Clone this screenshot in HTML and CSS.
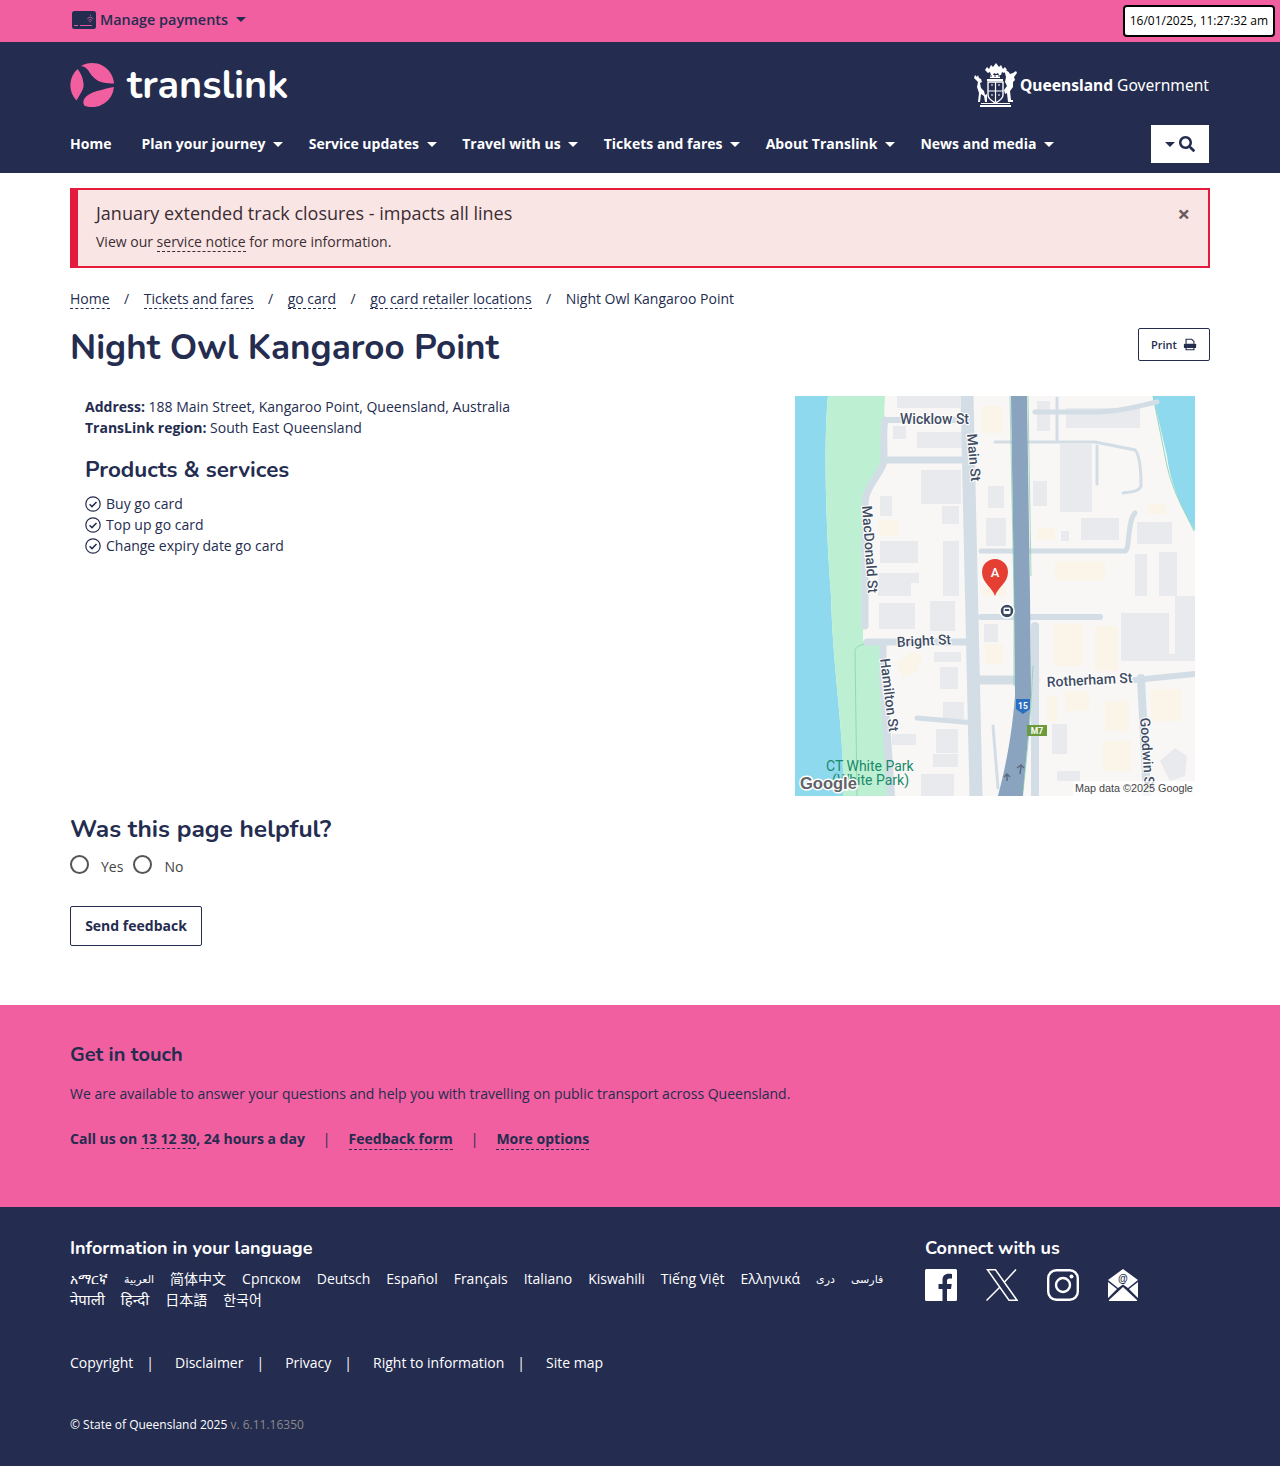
FILE: index.html
```html
<!DOCTYPE html>
<html lang="en">
  <head>
    <meta charset="UTF-8" />
    <meta name="viewport" content="width=device-width, initial-scale=1.0" />
    <title>Night Owl Kangaroo Point</title>
    <link rel="stylesheet" href="styles.css">
  </head>
  <body>
    <div class="topbar">
      <div class="topbar-inner">
        <a class="manage" href="#">
          <svg class="manage-icon" viewBox="0 0 24 18" width="24" height="18">
            <rect width="24" height="18" rx="2.500" fill="#242c4f"/>
            <path d="M15.500 8a3 3 0 0 1 5.500 0M16.500 9.500a2.200 2.200 0 0 1 3.500 0M17.500 11a1 1 0 0 1 1.500 0M18 4.500a1.500 1.500 0 0 1 1 0" fill="none" stroke="#f15fa0" stroke-width=".8"/>
            <path d="M2 14.500h4M8 14.500h12" stroke="#f15fa0" stroke-width=".9"/>
          </svg>
          Manage payments <span class="caret caret-dark"></span>
        </a>
      </div>
      <div class="clock">16/01/2025, 11:27:32 am</div>
    </div>

    <header class="site-header">
      <div class="wrap">
        <div class="brand-row">
          <a class="logo" href="#">
            <svg viewBox="0 0 44 44" width="44" height="44">
              <g fill="#f15fa0">
                <path d="M11 3A22 22 0 0 1 44 20.500C36 20.500 31 19.500 27.500 17.500C23 15 20.500 11 18 7C16 4.500 14 3.500 11 3Z"/>
                <path d="M7.500 6A22 22 0 0 0 6.500 37.500C7.500 35.500 9 33.500 10 31.500C12.500 27.500 14 24.500 13.500 20.500C13 15 11 10 7.500 6Z"/>
                <path d="M44 24A22 22 0 0 1 15 43C13 41 13 38.500 14 36.500C16 32.500 21 30 27 28C33 26.500 38 25 44 24Z"/>
              </g>
            </svg>
            <span class="logo-text">translink</span>
          </a>
          <a class="qg" href="#">
            <svg class="crest" viewBox="0 0 48 46" width="48" height="46">
              <g fill="#fff">
                <path d="M3 13l2 2 1-2 1 3 2 1 1 3-2 1 1 5 3 3 1 4 2-1v8h-2l-1-6-3-2-1 8H6l1-9-2-6 1-5-2-2-2-2z"/>
                <path d="M33 9c2-1 4 1 5 3l3-1 3-2 1 2-3 4 1 3-2 2v5l-3 4 1 9h2v2h-5l-1-9-2 1-1-4 3-4-2-4 1-5-1-4z"/>
                <path d="M9 41h29v1H9zM8 43h31v2H8z"/>
                <path d="M15 19h16v-2H15zM13 8l2-3 2 2 2-4 2 2 3-4 3 4 2-2 2 4 2-2 2 3-3 3-2-1-1 3h-2l-1-2-2 1-2-1-1 2h-2l-1-3-2 1z"/>
                <path d="M18 13h10v3H18z"/>
              </g>
              <path d="M16 20h15v13c0 4-4 6-7.500 8C20 39 16 37 16 33z" fill="none" stroke="#fff" stroke-width="1.400"/>
              <path d="M23.500 20v20M16 29h15M19 23h2M26 23h2M19 33h2M26 33h2" stroke="#fff" stroke-width="1.200"/>
              <path d="M18 14h2M22 14h2M26 14h2" stroke="#242c4f" stroke-width="1"/>
            </svg>
            <span class="qg-text"><b>Queensland</b> Government</span>
          </a>
        </div>
        <nav class="main-nav">
          <ul class="nav-list">
            <li class="nav-home"><a href="#">Home</a></li>
            <li><a href="#">Plan your journey <span class="caret"></span></a></li>
            <li><a href="#">Service updates <span class="caret"></span></a></li>
            <li><a href="#">Travel with us <span class="caret"></span></a></li>
            <li><a href="#">Tickets and fares <span class="caret"></span></a></li>
            <li><a href="#">About Translink <span class="caret"></span></a></li>
            <li><a href="#">News and media <span class="caret"></span></a></li>
          </ul>
          <button class="search-btn">
            <span class="caret caret-dark"></span>
            <svg viewBox="0 0 512 512" width="16" height="16"><path fill="#242c4f" d="M505 442.700 405.300 343c-4.500-4.500-10.600-7-17-7H372c27.600-35.300 44-79.700 44-128C416 93.100 322.900 0 208 0S0 93.100 0 208s93.100 208 208 208c48.300 0 92.700-16.400 128-44v16.300c0 6.400 2.500 12.500 7 17l99.700 99.700c9.400 9.400 24.600 9.400 33.900 0l28.300-28.300c9.400-9.400 9.400-24.600.1-34zM208 336c-70.700 0-128-57.200-128-128 0-70.700 57.200-128 128-128 70.700 0 128 57.200 128 128 0 70.700-57.200 128-128 128z"/></svg>
          </button>
        </nav>
      </div>
    </header>

    <main class="wrap">
      <div class="alert">
        <div>
          <h2 class="alert-title">January extended track closures - impacts all lines</h2>
          <p class="alert-text">View our <a href="#">service notice</a> for more information.</p>
        </div>
        <span class="alert-close">×</span>
      </div>

      <ol class="breadcrumb">
        <li><a href="#">Home</a></li>
        <li><a href="#">Tickets and fares</a></li>
        <li><a href="#">go card</a></li>
        <li><a href="#">go card retailer locations</a></li>
        <li>Night Owl Kangaroo Point</li>
      </ol>

      <div class="title-row">
        <h1>Night Owl Kangaroo Point</h1>
        <button class="print-btn">
          Print
          <svg viewBox="0 0 16 14" width="14" height="13"><path d="M3.500 6V1h6.500l2.500 2.500V6M3.500 10v3h9v-3" fill="none" stroke="#242c4f" stroke-width="1.300"/><rect x="1" y="6" width="14" height="5" rx="1" fill="#242c4f"/></svg>
        </button>
      </div>

      <div class="retailer">
        <div class="retailer-info">
          <p class="detail"><b>Address:</b> 188 Main Street, Kangaroo Point, Queensland, Australia</p>
          <p class="detail"><b>TransLink region:</b> South East Queensland</p>
          <h2 class="products-title">Products &amp; services</h2>
          <ul class="products">
            <li><svg viewBox="0 0 16 16" width="16" height="16"><circle cx="8" cy="8" r="7.200" fill="none" stroke="#242c4f" stroke-width="1.200"/><path d="M4.600 8.300l2.400 2.300 4.500-4.600" fill="none" stroke="#242c4f" stroke-width="1.500"/></svg>Buy go card</li>
            <li><svg viewBox="0 0 16 16" width="16" height="16"><circle cx="8" cy="8" r="7.200" fill="none" stroke="#242c4f" stroke-width="1.200"/><path d="M4.600 8.300l2.400 2.300 4.500-4.600" fill="none" stroke="#242c4f" stroke-width="1.500"/></svg>Top up go card</li>
            <li><svg viewBox="0 0 16 16" width="16" height="16"><circle cx="8" cy="8" r="7.200" fill="none" stroke="#242c4f" stroke-width="1.200"/><path d="M4.600 8.300l2.400 2.300 4.500-4.600" fill="none" stroke="#242c4f" stroke-width="1.500"/></svg>Change expiry date go card</li>
          </ul>
        </div>

        <svg class="map" viewBox="0 0 400 400" width="400" height="400">
          <rect width="400" height="400" fill="#f8f7f5"/>
          <path d="M0 0H33C29 40 30 120 36 200C38 280 50 340 48 400H0Z" fill="#8fd9ef"/>
          <path d="M33 0H90C88 30 90 60 88 70C80 85 70 95 68 110V245H85L95 330L98 400H48C50 340 38 280 36 200C30 120 29 40 33 0Z" fill="#bdf0d2"/>
          <path d="M358 0H400V135C385 110 375 85 372 60Z" fill="#8fd9ef"/>
          <path d="M358 0L370 60C376 95 390 115 399 135" fill="none" stroke="#7ecfa8" stroke-width=".8"/>
          <path d="M62 400L60 255C60 250 68 248 73 248" fill="none" stroke="#7ecfa8" stroke-width=".7"/>

          <g fill="#e8eaed">
            <rect x="102" y="0" width="40" height="12"/><rect x="140" y="0" width="25" height="12"/>
            <rect x="98" y="30" width="13" height="13"/><rect x="122" y="36" width="48" height="16"/>
            <rect x="126" y="74" width="40" height="34"/><rect x="85" y="100" width="12" height="20"/>
            <rect x="147" y="110" width="17" height="18"/><rect x="148" y="145" width="16" height="55"/>
            <rect x="85" y="145" width="38" height="22"/><rect x="112" y="177" width="12" height="10"/>
            <rect x="193" y="90" width="16" height="22"/><rect x="191" y="122" width="20" height="28"/>
            <rect x="242" y="5" width="13" height="30"/><rect x="271" y="12" width="74" height="20"/>
            <rect x="265" y="48" width="32" height="68"/><rect x="238" y="85" width="14" height="25"/>
            <rect x="286" y="122" width="38" height="22"/><rect x="342" y="126" width="35" height="22"/>
            <rect x="266" y="135" width="8" height="10"/>
            <rect x="340" y="158" width="12" height="42"/><rect x="364" y="156" width="18" height="44"/>
            <rect x="83" y="177" width="33" height="23"/>
            <rect x="84" y="207" width="36" height="26"/><rect x="135" y="205" width="25" height="30"/>
            <rect x="189" y="228" width="14" height="18"/><rect x="380" y="200" width="20" height="60"/>
            <rect x="326" y="225" width="10" height="28"/><rect x="139" y="256" width="27" height="10"/>
            <rect x="145" y="271" width="18" height="22"/><rect x="148" y="306" width="21" height="17"/>
            <rect x="257" y="328" width="15" height="30"/><rect x="141" y="333" width="22" height="24"/>
            <rect x="138" y="358" width="25" height="13"/><rect x="126" y="378" width="33" height="22"/>
            <rect x="262" y="375" width="23" height="10"/><rect x="97" y="338" width="24" height="11"/>
            <path d="M326 280V217H374V258H400V265H326V280Z"/><path d="M365 365L380 352L392 360L390 380L375 385Z"/>
          </g>
          <g fill="#faf5e8">
            <rect x="186" y="10" width="22" height="27"/><rect x="84" y="124" width="20" height="16"/>
            <rect x="242" y="132" width="18" height="12"/><rect x="260" y="165" width="50" height="20"/>
            <rect x="353" y="108" width="18" height="10"/><rect x="188" y="190" width="23" height="10"/>
            <rect x="258" y="228" width="30" height="42"/><rect x="300" y="230" width="23" height="45"/>
            <rect x="190" y="248" width="18" height="20"/><rect x="270" y="295" width="24" height="20"/>
            <rect x="252" y="300" width="10" height="25"/><rect x="310" y="305" width="24" height="30"/>
            <rect x="356" y="293" width="30" height="32"/><rect x="308" y="345" width="28" height="30"/>
            <path d="M102 268L118 255L128 260L122 275L108 282Z" />
          </g>

          <g fill="none" stroke="#d3dde6" stroke-linecap="round">
            <path d="M90 24H175" stroke-width="6"/>
            <path d="M90 24C88 30 89 40 89 65M92 64H175M89 65C88 76 70 90 70 108V230M72 246H175M88 250V280" stroke-width="7"/>
            <path d="M88 280L96 400" stroke-width="8"/>
            <path d="M172 0L181 400" stroke-width="13"/>
            <path d="M186 155H330C335 155 332 125 340 117" stroke-width="5"/>
            <path d="M186 221H305" stroke-width="6"/>
            <path d="M186 284H240" stroke-width="9"/>
            <path d="M240 16H300C330 16 350 8 362 6" stroke-width="5"/>
            <path d="M122 322L180 327" stroke-width="5"/>
            <path d="M240 230V400" stroke-width="8"/>
            <path d="M340 284L400 278" stroke-width="6"/>
            <path d="M346 282L352 400" stroke-width="8"/>
            <path d="M200 46H300L340 54C346 60 346 80 346 90C344 96 335 96 328 97M302 50V88M262 46V2" stroke-width="3"/>
            <path d="M198 330L203 392" stroke-width="3"/>
          </g>
          <path d="M216 0H232L235 200L236 300C234 340 230 370 228 400H203C208 380 216 350 220 300L219 200Z" fill="#8aa3bf"/>
          <path d="M215 0L219 200L219 290M233 0L236 180M238 270C235 330 232 360 228 395" fill="none" stroke="#7ecfa8" stroke-width=".7"/>
          <path d="M225 378l1-8M222 372l4-3 3 3M212 385v-7M209 381l3-3 3 3" fill="none" stroke="#5a6b80" stroke-width="1.500"/>

          <path d="M221 303h14v10l-7 5-7-5z" fill="#2a6fc0"/>
          <text class="map-shield" x="228" y="313">15</text>
          <rect x="232" y="329" width="20" height="11" fill="#6c9a3c"/>
          <text class="map-shield" x="242" y="338">M7</text>

          <g class="map-label">
            <text x="105" y="28">Wicklow St</text>
            <text transform="translate(172 38) rotate(85)">Main St</text>
            <text transform="translate(67 110) rotate(86)">MacDonald St</text>
            <text transform="rotate(-3 102 251)" x="102" y="251">Bright St</text>
            <text transform="translate(85 263) rotate(83)">Hamilton St</text>
            <text transform="rotate(-3 252 291)" x="252" y="291">Rotherham St</text>
            <text transform="translate(345 322) rotate(86)">Goodwin St</text>
          </g>
          <text class="map-park" x="31" y="375">CT White Park</text>
          <text class="map-park" x="37" y="389">(White Park)</text>
          <text class="map-google" x="5" y="393">Google</text>
          <rect x="278" y="385" width="122" height="15" fill="#fff" opacity=".75"/>
          <text class="map-credit" x="280" y="396">Map data ©2025 Google</text>

          <circle cx="212" cy="215" r="7" fill="#3d4a5f" stroke="#fff" stroke-width="1.500"/>
          <rect x="208.500" y="211.500" width="7" height="6.500" rx="1.500" fill="#fff"/>
          <rect x="209.800" y="213" width="4.400" height="2" fill="#3d4a5f"/>
          <path d="M200 200C197 191 187 187 187 176A13 13 0 0 1 213 176C213 187 203 191 200 200Z" fill="#e53f33"/>
          <text class="map-pin" x="200" y="181">A</text>
        </svg>
      </div>

      <section class="feedback">
        <h2>Was this page helpful?</h2>
        <div class="radios">
          <label><input type="radio" name="helpful" /> Yes</label>
          <label><input type="radio" name="helpful" /> No</label>
        </div>
        <button class="send-btn">Send feedback</button>
      </section>
    </main>

    <section class="contact">
      <div class="wrap">
        <h2>Get in touch</h2>
        <p>We are available to answer your questions and help you with travelling on public transport across Queensland.</p>
        <div class="contact-links">
          <span>Call us on <a href="#">13 12 30</a>, 24 hours a day</span>
          <i>|</i>
          <a href="#">Feedback form</a>
          <i>|</i>
          <a href="#">More options</a>
        </div>
      </div>
    </section>

    <footer class="site-footer">
      <div class="wrap">
        <div class="footer-top">
          <div class="languages">
            <h3>Information in your language</h3>
            <ul class="lang-list">
              <li>አማርኛ</li><li class="lang-rtl">العربية</li><li>简体中文</li><li>Српском</li><li>Deutsch</li><li>Español</li><li>Français</li><li>Italiano</li><li>Kiswahili</li><li>Tiếng Việt</li><li>Ελληνικά</li><li class="lang-rtl">دری</li><li class="lang-rtl">فارسی</li><li class="lang-deva">नेपाली</li><li class="lang-deva">हिन्दी</li><li>日本語</li><li>한국어</li>
            </ul>
          </div>
          <div class="connect">
            <h3>Connect with us</h3>
            <div class="social">
              <svg viewBox="0 0 32 32" width="32" height="32"><path fill="#fff" d="M1.500 0h29A1.500 1.500 0 0 1 32 1.500v29a1.500 1.500 0 0 1-1.500 1.500H22V20h4l.7-5H22v-3c0-1.500.5-2.500 2.500-2.500H27V5c-.6-.1-2-.2-3.500-.2-3.600 0-6 2.100-6 6.100V15h-4v5h4v12H1.500A1.500 1.500 0 0 1 0 30.500v-29A1.500 1.500 0 0 1 1.500 0z"/></svg>
              <svg viewBox="0 0 32 32" width="32" height="32"><path fill="none" stroke="#fff" stroke-width="1.500" d="M1.500.8h8L31 31.200h-8zM30 .5L18 13.500M13.500 18.500L.5 31.500"/></svg>
              <svg viewBox="0 0 32 32" width="32" height="32"><rect x="1.200" y="1.200" width="29.600" height="29.600" rx="8" fill="none" stroke="#fff" stroke-width="2.400"/><circle cx="16" cy="16" r="7" fill="none" stroke="#fff" stroke-width="2.400"/><circle cx="24.500" cy="7.500" r="2" fill="#fff"/></svg>
              <svg viewBox="0 0 30 32" width="30" height="32"><path fill="#fff" d="M0 11L15 0l15 11-10 8-5-3.500L10 19zM0 13l9 7L0 29zM30 13l-9 7 9 9zM1 31l14-13 14 13v1H1z"/><text class="mail-at" x="15" y="13">@</text></svg>
            </div>
          </div>
        </div>
        <ul class="footer-links">
          <li><a href="#">Copyright</a></li>
          <li><a href="#">Disclaimer</a></li>
          <li><a href="#">Privacy</a></li>
          <li><a href="#">Right to information</a></li>
          <li><a href="#">Site map</a></li>
        </ul>
        <p class="legal">© State of Queensland 2025 <span>v. 6.11.16350</span></p>
      </div>
    </footer>
  </body>
</html>
```

FILE: styles.css
```css
* {
  box-sizing: border-box;
}
body {
  margin: 0;
  font-family: "Open Sans", "Noto Sans", "Noto Sans CJK SC", "Noto Sans CJK JP", "DejaVu Sans", sans-serif;
  font-size: 14px;
  line-height: 21px;
  color: #242c4f;
  background: #fff;
}
a {
  color: inherit;
  text-decoration: none;
}
ul,
ol {
  list-style: none;
  margin: 0;
  padding: 0;
}
h1,
h2,
h3,
p {
  margin: 0;
}
.wrap {
  width: 1140px;
  margin: 0 auto;
}
.caret {
  display: inline-block;
  width: 0;
  height: 0;
  margin-left: 4px;
  vertical-align: 2px;
  border-left: 5px solid transparent;
  border-right: 5px solid transparent;
  border-top: 5px solid #fff;
}
.caret-dark {
  border-top-color: #242c4f;
}

/* top bar */
.topbar {
  display: flex;
  justify-content: space-between;
  align-items: center;
  height: 42px;
  padding: 0 5px 0 72px;
  background: #f15fa0;
}
.topbar-inner {
  margin-top: -3px;
}
.manage {
  display: flex;
  align-items: center;
  gap: 4px;
  font-weight: 600;
  font-size: 14.400px;
}
.clock {
  margin-top: -1px;
  padding: 3px 5px;
  border: 2px solid #000;
  border-radius: 4px;
  background: #fff;
  color: #000;
  font-size: 12px;
  line-height: 22px;
  height: 32px;
}

/* header */
.site-header {
  height: 131px;
  background: #242c4f;
  color: #fff;
}
.brand-row {
  display: flex;
  justify-content: space-between;
  align-items: center;
  height: 83px;
  padding-top: 2px;
}
.logo {
  display: flex;
  align-items: center;
  gap: 13px;
}
.logo-text {
  font-family: "Nunito", "Lato", sans-serif;
  font-size: 39.500px;
  font-weight: 700;
  line-height: 44px;
  margin-top: 1px;
}
.qg {
  display: flex;
  align-items: center;
  margin-right: 1px;
}
.qg-text {
  margin-top: 1px;
  font-family: "Noto Sans", sans-serif;
  font-size: 15.600px;
}
.main-nav {
  display: flex;
  justify-content: space-between;
  align-items: center;
}
.nav-list {
  display: flex;
  gap: 25.500px;
  margin-top: -2px;
  font-weight: 700;
  font-size: 14px;
}
.nav-home {
  margin-right: 4.500px;
}
.search-btn {
  display: flex;
  align-items: center;
  justify-content: center;
  gap: 4px;
  width: 58px;
  height: 38px;
  margin-right: 1px;
  border: 0;
  padding: 0;
  background: #fff;
}
.search-btn .caret {
  margin: 0;
}

/* alert */
.alert {
  display: flex;
  justify-content: space-between;
  margin-top: 15px;
  height: 80px;
  padding: 11px 18px 0 18px;
  border: 2px solid #e31c3d;
  border-left-width: 8px;
  background: #f9e5e4;
  color: #3b2d33;
}
.alert-title {
  font-size: 18px;
  font-weight: 400;
  line-height: 24px;
}
.alert-text {
  margin-top: 6px;
  line-height: 21px;
}
.alert-text a,
.breadcrumb a {
  border-bottom: 1px dashed currentColor;
}
.alert-close {
  margin-top: 2px;
  font-size: 22px;
  font-weight: 700;
  line-height: 20px;
  color: #6b5a5e;
}

/* breadcrumb */
.breadcrumb {
  display: flex;
  margin-top: 20px;
}
.breadcrumb li + li::before {
  content: "/";
  margin: 0 14.500px;
}
.title-row {
  display: flex;
  justify-content: space-between;
  align-items: flex-start;
  margin-top: 17px;
}
h1 {
  font-family: "Nunito", "Lato", sans-serif;
  font-size: 35px;
  font-weight: 700;
  line-height: 44px;
}
.print-btn {
  display: flex;
  align-items: center;
  justify-content: center;
  gap: 6px;
  width: 72px;
  height: 33px;
  margin-top: 2px;
  padding: 0;
  border: 1px solid #242c4f;
  border-radius: 2px;
  background: #fff;
  color: #242c4f;
  font: 600 11px "Open Sans", sans-serif;
}

/* retailer details */
.retailer {
  display: flex;
  justify-content: space-between;
  margin-top: 26px;
  padding: 0 15px;
}
.detail {
  line-height: 21px;
}
.products-title {
  margin-top: 18px;
  font-family: "Nunito", "Lato", sans-serif;
  font-size: 22.400px;
  font-weight: 700;
  line-height: 28px;
}
.products {
  margin-top: 9px;
}
.products li {
  display: flex;
  align-items: center;
  gap: 5px;
  height: 21px;
}
.map {
  display: block;
}
.map-label text {
  font: 500 14px "Roboto", "Liberation Sans", sans-serif;
  fill: #3f4d63;
  stroke: #fff;
  stroke-width: 2px;
  paint-order: stroke;
}
.map-park {
  font: 400 14px "Roboto", sans-serif;
  fill: #1a8a6a;
}
.map-google {
  font: 700 16.500px "Liberation Sans", sans-serif;
  fill: #5f6368;
  stroke: #fff;
  stroke-width: 3px;
  paint-order: stroke;
}
.map-credit {
  font: 400 10.800px "Liberation Sans", sans-serif;
  fill: #444;
}
.map-shield {
  font: 700 8.500px "Roboto", sans-serif;
  fill: #fff;
  text-anchor: middle;
}
.map-pin {
  font: 500 13px "Roboto", sans-serif;
  fill: #fff;
  text-anchor: middle;
}

/* feedback */
.feedback {
  height: 209px;
  padding-top: 18px;
}
.feedback h2 {
  font-family: "Nunito", "Lato", sans-serif;
  font-size: 24.500px;
  font-weight: 700;
  line-height: 30px;
}
.radios {
  display: flex;
  gap: 10px;
  margin-top: 11px;
  color: #444;
}
.radios label {
  display: flex;
  align-items: center;
  gap: 12px;
}
.radios input {
  appearance: none;
  width: 19px;
  height: 19px;
  margin: 0 0 4px;
  border: 2px solid #555;
  border-radius: 50%;
  background: #fff;
}
.send-btn {
  display: block;
  width: 132px;
  height: 40px;
  margin-top: 28px;
  padding: 0 0 2px;
  border: 1px solid #242c4f;
  border-radius: 2px;
  background: #fff;
  color: #242c4f;
  font: 700 14px "Open Sans", sans-serif;
}

/* get in touch */
.contact {
  height: 202px;
  padding-top: 36px;
  background: #f15fa0;
}
.contact h2 {
  font-family: "Nunito", "Lato", sans-serif;
  font-size: 20px;
  font-weight: 700;
  line-height: 28px;
}
.contact p {
  margin-top: 14px;
}
.contact-links {
  display: flex;
  gap: 18px;
  margin-top: 24px;
  font-weight: 700;
}
.contact-links i {
  font-style: normal;
  font-weight: 400;
}
.contact-links a {
  border-bottom: 1px dashed currentColor;
}

/* footer */
.site-footer {
  height: 259px;
  padding-top: 28px;
  background: #242c4f;
  color: #fff;
}
.footer-top {
  display: flex;
  height: 92px;
}
.languages {
  width: 855px;
}
.site-footer h3 {
  font-family: "Nunito", "Lato", sans-serif;
  font-size: 18px;
  font-weight: 700;
  line-height: 26px;
}
.lang-list {
  display: flex;
  flex-wrap: wrap;
  gap: 0 16px;
  margin-top: 7px;
  width: 830px;
  line-height: 21px;
}
.lang-rtl {
  font-size: 11px;
}
.lang-deva {
  font-size: 15px;
}
.social {
  display: flex;
  align-items: center;
  gap: 29px;
  margin-top: 8px;
}
.mail-at {
  font: 700 10px "Liberation Sans", sans-serif;
  fill: #242c4f;
  text-anchor: middle;
}
.footer-links {
  display: flex;
  margin-top: 25px;
}
.footer-links li + li::before {
  content: "|";
  margin: 0 21px 0 13px;
}
.legal {
  margin-top: 41px;
  font-size: 12px;
}
.legal span {
  color: #8a8a8a;
}
```
